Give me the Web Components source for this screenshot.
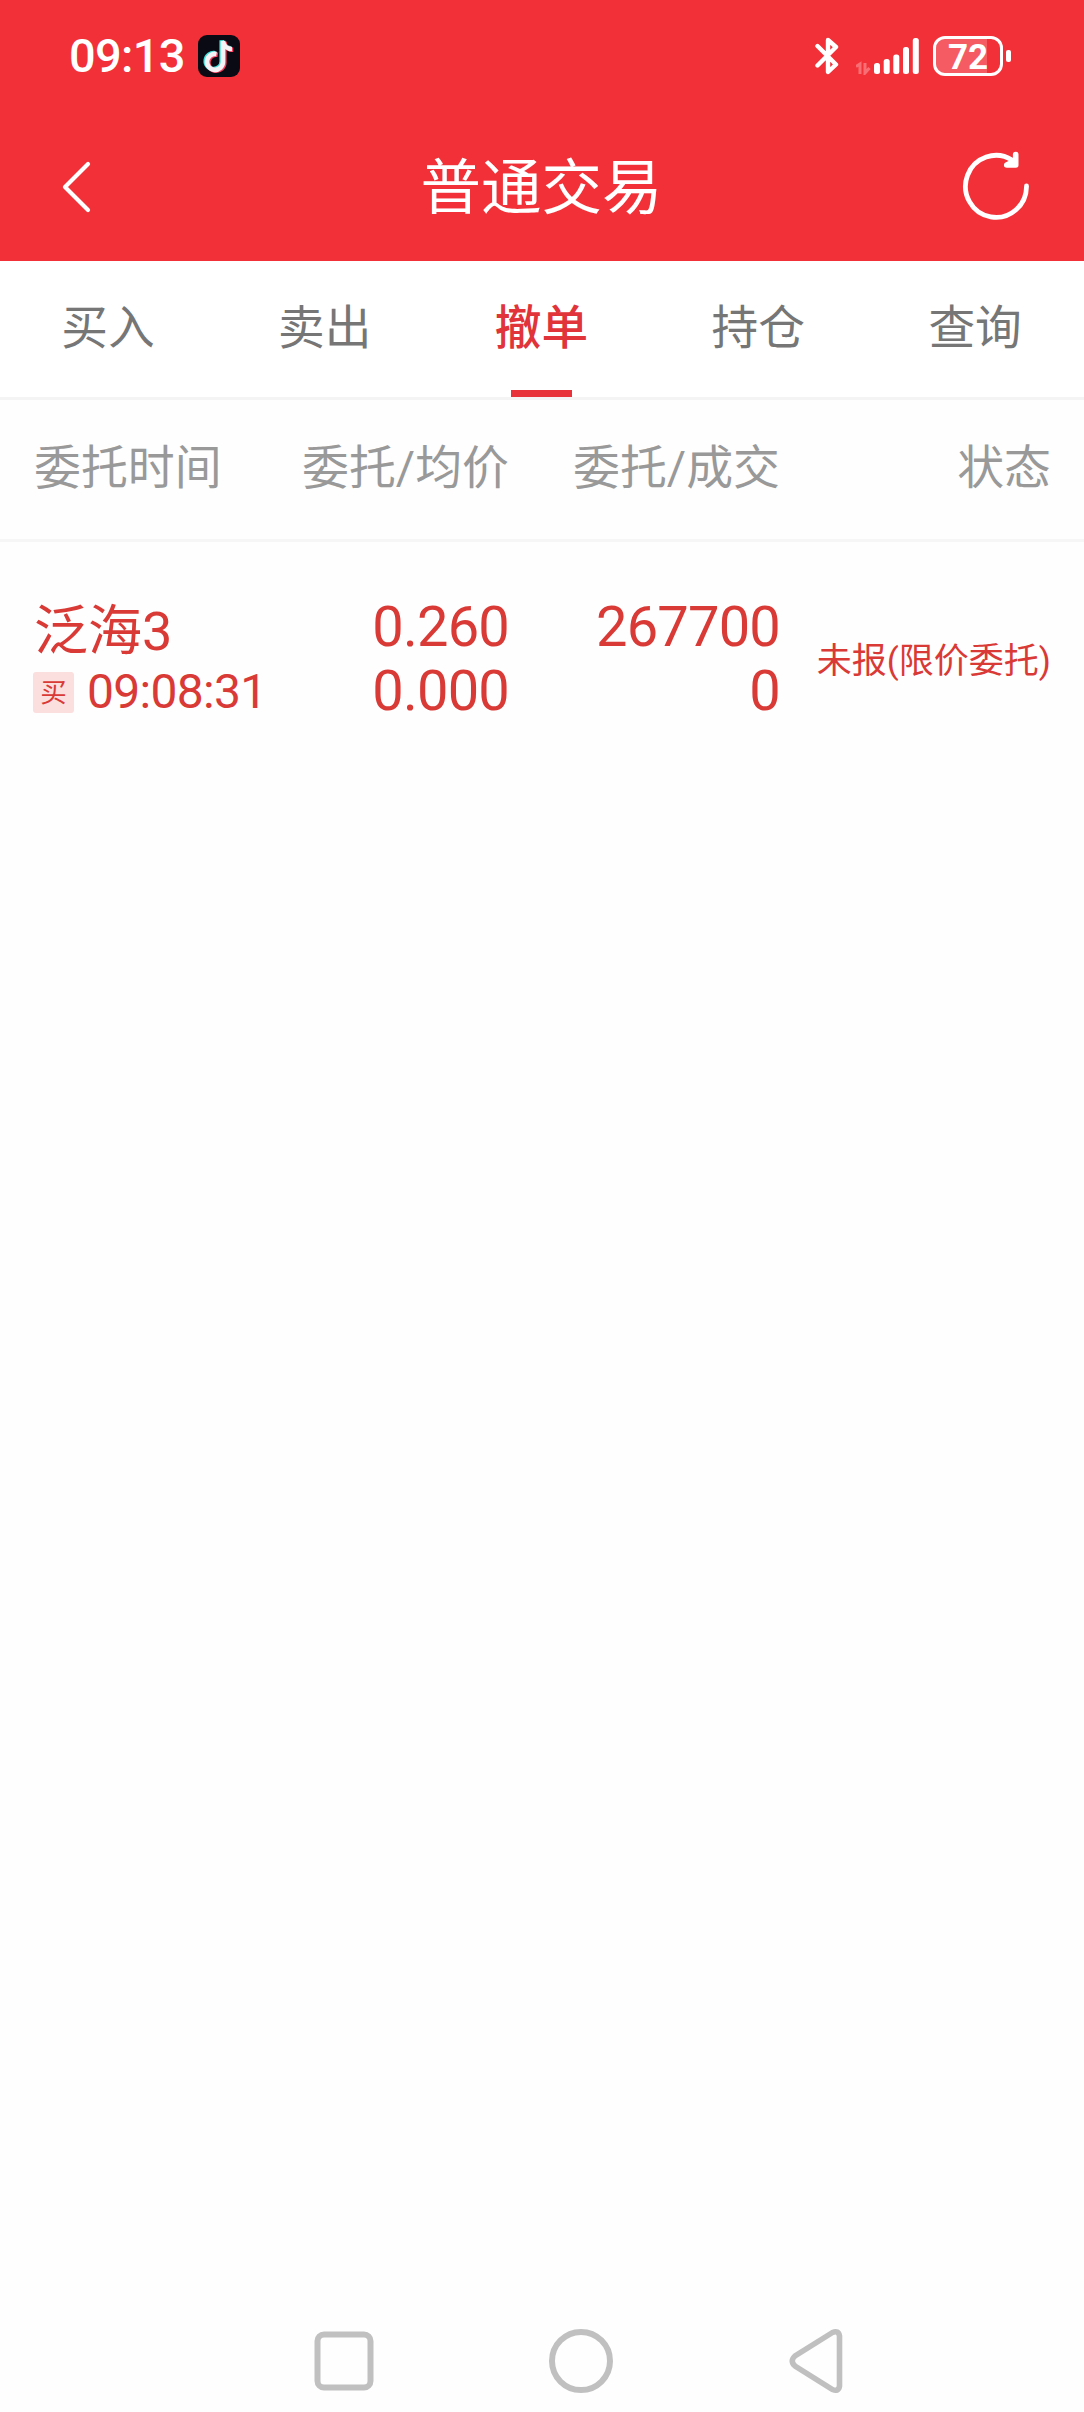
<!DOCTYPE html>
<html lang="zh-CN">
<head>
<meta charset="UTF-8">
<title>普通交易</title>
<style>
    html, body{
        margin: 0;
        background-color: #fefefe;
    }
    body{
        font-family: Roboto, "Noto Sans CJK SC", sans-serif;
    }
</style>
</head>
<body>
<trade-screen></trade-screen>

<script>
//Barra de estado del teléfono
class StatusBar extends HTMLElement {
    constructor (){
        super();
        this.attachShadow({mode: "open"});
        this.render();
    }

    render (){
        this.shadowRoot.innerHTML =
        `
        <style>
            :host{
                display: flex;
                align-items: center;
                height: 112px;
                padding: 0 73px 0 69px;
                box-sizing: border-box;
                color: white;
            }
            .time{
                width: 129px;
                font-size: 47px;
                line-height: 56px;
                font-weight: 500;
                letter-spacing: -.7px;
                white-space: nowrap;
            }
            svg{
                display: block;
            }
            .right{
                display: flex;
                align-items: center;
                margin-left: auto;
            }
            .signal{
                margin: 0 14px 0 17px;
            }
            .battery{
                display: flex;
                align-items: center;
                gap: 3px;
            }
            .level{
                display: flex;
                align-items: center;
                justify-content: center;
                box-sizing: border-box;
                width: 70px;
                height: 40px;
                padding-top: 3px;
                border: 3px solid white;
                border-radius: 12px;
                background: linear-gradient(to right, #f55b62 51px, transparent 51px) padding-box;
                font-size: 35px;
                line-height: 34px;
                font-weight: bold;
            }
            .nub{
                width: 5px;
                height: 12px;
                border-radius: 2px;
                background-color: white;
            }
        </style>
        <span class="time"><slot></slot></span>
        <svg width="42" height="42" viewBox="0 0 42 42">
            <rect width="42" height="42" rx="9" fill="#0a0a14"/>
            <g fill="none" stroke-width="4.600">
                <path d="M18.500 19A8 8 0 1 0 25 27V6c.5 5 4 8 9 8" stroke="#3fe0d8" transform="translate(-1.300 -.8)"/>
                <path d="M18.500 19A8 8 0 1 0 25 27V6c.5 5 4 8 9 8" stroke="#f5405f" transform="translate(1.300 .8)"/>
                <path d="M18.500 19A8 8 0 1 0 25 27V6c.5 5 4 8 9 8" stroke="#f4f2f4"/>
            </g>
        </svg>
        <div class="right">
            <svg width="24" height="38" viewBox="0 0 24 38">
                <path d="M2.500 9 21 27.500 13 35V3l8 7L2.500 28.500" fill="none" stroke="white" stroke-width="4.400" stroke-linejoin="round" stroke-linecap="round"/>
            </svg>
            <svg class="signal" width="63" height="38" viewBox="0 0 63 38">
                <path d="M0 29.500 4 27v10M9 26v10l4.500-5" fill="none" stroke="#f76e74" stroke-width="3"/>
                <g fill="white">
                    <rect x="18" y="26" width="6" height="11" rx="2.500"/>
                    <rect x="27.700" y="22" width="6" height="15" rx="2.500"/>
                    <rect x="37.300" y="17.500" width="6" height="19.500" rx="2.500"/>
                    <rect x="47" y="10" width="6" height="27" rx="2.500"/>
                    <rect x="56.800" y="1" width="6" height="36" rx="2.500"/>
                </g>
            </svg>
            <div class="battery"><span class="level">72</span><span class="nub"></span></div>
        </div>
        `;
    }
}

//Encabezado con volver, título y refrescar
class TitleBar extends HTMLElement {
    constructor (){
        super();
        this.attachShadow({mode: "open"});
        this.render();
    }

    render (){
        this.shadowRoot.innerHTML =
        `
        <style>
            :host{
                display: flex;
                justify-content: space-between;
                align-items: center;
                height: 149px;
                padding: 0 52px 0 60px;
                box-sizing: border-box;
                color: white;
            }
            h1{
                margin: 0;
                padding: 4px 9px 0 0;
                font-size: 60.500px;
                line-height: 80px;
                font-weight: 400;
            }
            svg{
                display: block;
            }
        </style>
        <svg width="72" height="76" viewBox="0 0 72 76" fill="none" stroke="white" stroke-width="4.200" stroke-linecap="round" stroke-linejoin="round">
            <path d="M28 15 5 38l23 23"/>
        </svg>
        <h1><slot></slot></h1>
        <svg width="72" height="76" viewBox="0 0 72 76" fill="none" stroke="white" stroke-width="4.800" stroke-linecap="round" stroke-linejoin="round">
            <path d="M66.500 37A30.500 31 0 1 1 52 11"/>
            <path d="M55.700 5.500V16h-9l8-4" fill="white" stroke-width="5.600"/>
        </svg>
        `;
    }
}

//Una pestaña, con la línea roja si está activa
class TradeTab extends HTMLElement {
    constructor (){
        super();
        this.attachShadow({mode: "open"});
        this.render();
    }

    render (){
        this.shadowRoot.innerHTML =
        `
        <style>
            :host{
                display: flex;
                flex-direction: column;
                align-items: center;
                flex: 1;
                color: #767676;
                font-size: 46.700px;
                cursor: pointer;
            }
            span{
                display: flex;
                align-items: center;
                box-sizing: border-box;
                height: 129px;
                padding: 5px 1px 0 0;
                line-height: 60px;
            }
            i{
                width: 61px;
                height: 7px;
            }
            :host([active]){
                color: #e0343a;
                font-weight: 500;
            }
            :host([active]) i{
                background-color: #e8333a;
            }
        </style>
        <span><slot></slot></span>
        <i></i>
        `;
    }
}

class TradeTabs extends HTMLElement {
    constructor (){
        super();
        this.attachShadow({mode: "open"});
        this.shadowRoot.innerHTML =
        `
        <style>
            :host{
                display: flex;
                height: 136px;
                border-bottom: 3px solid #f4f4f4;
                background-color: white;
            }
        </style>
        <slot></slot>
        `;
    }
}

//Títulos de las columnas
class OrderHead extends HTMLElement {
    constructor (){
        super();
        this.attachShadow({mode: "open"});
        this.render();
    }

    render (){
        this.shadowRoot.innerHTML =
        `
        <style>
            :host{
                display: grid;
                grid-template-columns: 205px 271px 271px 271px;
                align-items: center;
                height: 142px;
                padding: 0 33px 4px 33px;
                box-sizing: border-box;
                border-bottom: 3px solid #f6f6f6;
                color: #999;
                font-size: 46.900px;
                line-height: 60px;
                text-align: right;
                white-space: nowrap;
            }
            .first{
                padding-left: 1px;
                text-align: left;
            }
        </style>
        <span class="first">委托时间</span>
        <span>委托/均价</span>
        <span>委托/成交</span>
        <span>状态</span>
        `;
    }
}

//Fila de una orden
class OrderRow extends HTMLElement {
    constructor (){
        super();
        this.attachShadow({mode: "open"});
        this.render();
    }

    render (){
        this.shadowRoot.innerHTML =
        `
        <style>
            :host{
                display: grid;
                grid-template-columns: 205px 271px 271px 271px;
                align-items: center;
                padding: 53px 33px 0 33px;
                color: #d93a36;
                text-align: right;
                white-space: nowrap;
            }
            .name{
                display: block;
                padding-left: 1px;
                font-size: 54px;
                line-height: 72px;
                text-align: left;
            }
            .detail{
                display: flex;
                align-items: center;
                gap: 13px;
                height: 50px;
                margin-top: -1px;
                padding-bottom: 5px;
            }
            .side{
                flex: none;
                width: 41px;
                height: 41px;
                border-radius: 3px;
                background-color: #fbdfdf;
                font-size: 26.500px;
                line-height: 41px;
                text-align: center;
            }
            .time{
                font-size: 48px;
                line-height: 56px;
                letter-spacing: -.7px;
            }
            .numbers{
                font-size: 56px;
                line-height: 64px;
                letter-spacing: -.8px;
            }
            .numbers ::slotted(span){
                display: block;
            }
            .state{
                padding-top: 6px;
                font-size: 35px;
                line-height: 50px;
            }
        </style>
        <div>
            <span class="name"><slot name="name"></slot></span>
            <div class="detail">
                <span class="side"><slot name="side"></slot></span>
                <span class="time"><slot name="time"></slot></span>
            </div>
        </div>
        <div class="numbers"><slot name="price"></slot></div>
        <div class="numbers"><slot name="amount"></slot></div>
        <div class="state"><slot name="state"></slot></div>
        `;
    }
}

//Botones de navegación del sistema
class NavBar extends HTMLElement {
    constructor (){
        super();
        this.attachShadow({mode: "open"});
        this.render();
    }

    render (){
        this.shadowRoot.innerHTML =
        `
        <style>
            :host{
                display: flex;
                justify-content: space-between;
                align-items: center;
                margin-top: auto;
                height: 102px;
                padding: 0 231px 0 308px;
            }
            svg{
                display: block;
            }
        </style>
        <svg width="72" height="72" viewBox="0 0 72 72" fill="none" stroke="#c0c0c0" stroke-width="6">
            <rect x="9.500" y="9.500" width="53" height="53" rx="6.500"/>
        </svg>
        <svg width="72" height="72" viewBox="0 0 72 72" fill="none" stroke="#c0c0c0" stroke-width="6">
            <circle cx="36" cy="36" r="29"/>
        </svg>
        <svg width="72" height="72" viewBox="0 0 72 72" fill="none" stroke="#c0c0c0" stroke-width="5.600">
            <path d="M51.500 7.500 14 31Q8.500 36 14 41L51.500 64.500Q57.500 67 58.500 61V11Q57.500 5 51.500 7.500Z"/>
        </svg>
        `;
    }
}

//Pantalla completa
class TradeScreen extends HTMLElement {
    constructor (){
        super();
        this.attachShadow({mode: "open"});
        this.render();
    }

    render (){
        this.shadowRoot.innerHTML =
        `
        <style>
            :host{
                display: flex;
                flex-direction: column;
                width: 100%;
                height: 2412px;
                overflow: hidden;
                background-color: #fefefe;
            }
            header{
                background-color: #f23038;
            }
        </style>
        <header>
            <status-bar>09:13</status-bar>
            <title-bar>普通交易</title-bar>
        </header>
        <trade-tabs>
            <trade-tab>买入</trade-tab>
            <trade-tab>卖出</trade-tab>
            <trade-tab active>撤单</trade-tab>
            <trade-tab>持仓</trade-tab>
            <trade-tab>查询</trade-tab>
        </trade-tabs>
        <order-head></order-head>
        <order-row>
            <span slot="name">泛海3</span>
            <span slot="side">买</span>
            <span slot="time">09:08:31</span>
            <span slot="price">0.260</span>
            <span slot="price">0.000</span>
            <span slot="amount">267700</span>
            <span slot="amount">0</span>
            <span slot="state">未报(限价委托)</span>
        </order-row>
        <nav-bar></nav-bar>
        `;
    }
}

customElements.define("status-bar",StatusBar);
customElements.define("title-bar",TitleBar);
customElements.define("trade-tab",TradeTab);
customElements.define("trade-tabs",TradeTabs);
customElements.define("order-head",OrderHead);
customElements.define("order-row",OrderRow);
customElements.define("nav-bar",NavBar);
customElements.define("trade-screen",TradeScreen);
</script>
</body>
</html>
